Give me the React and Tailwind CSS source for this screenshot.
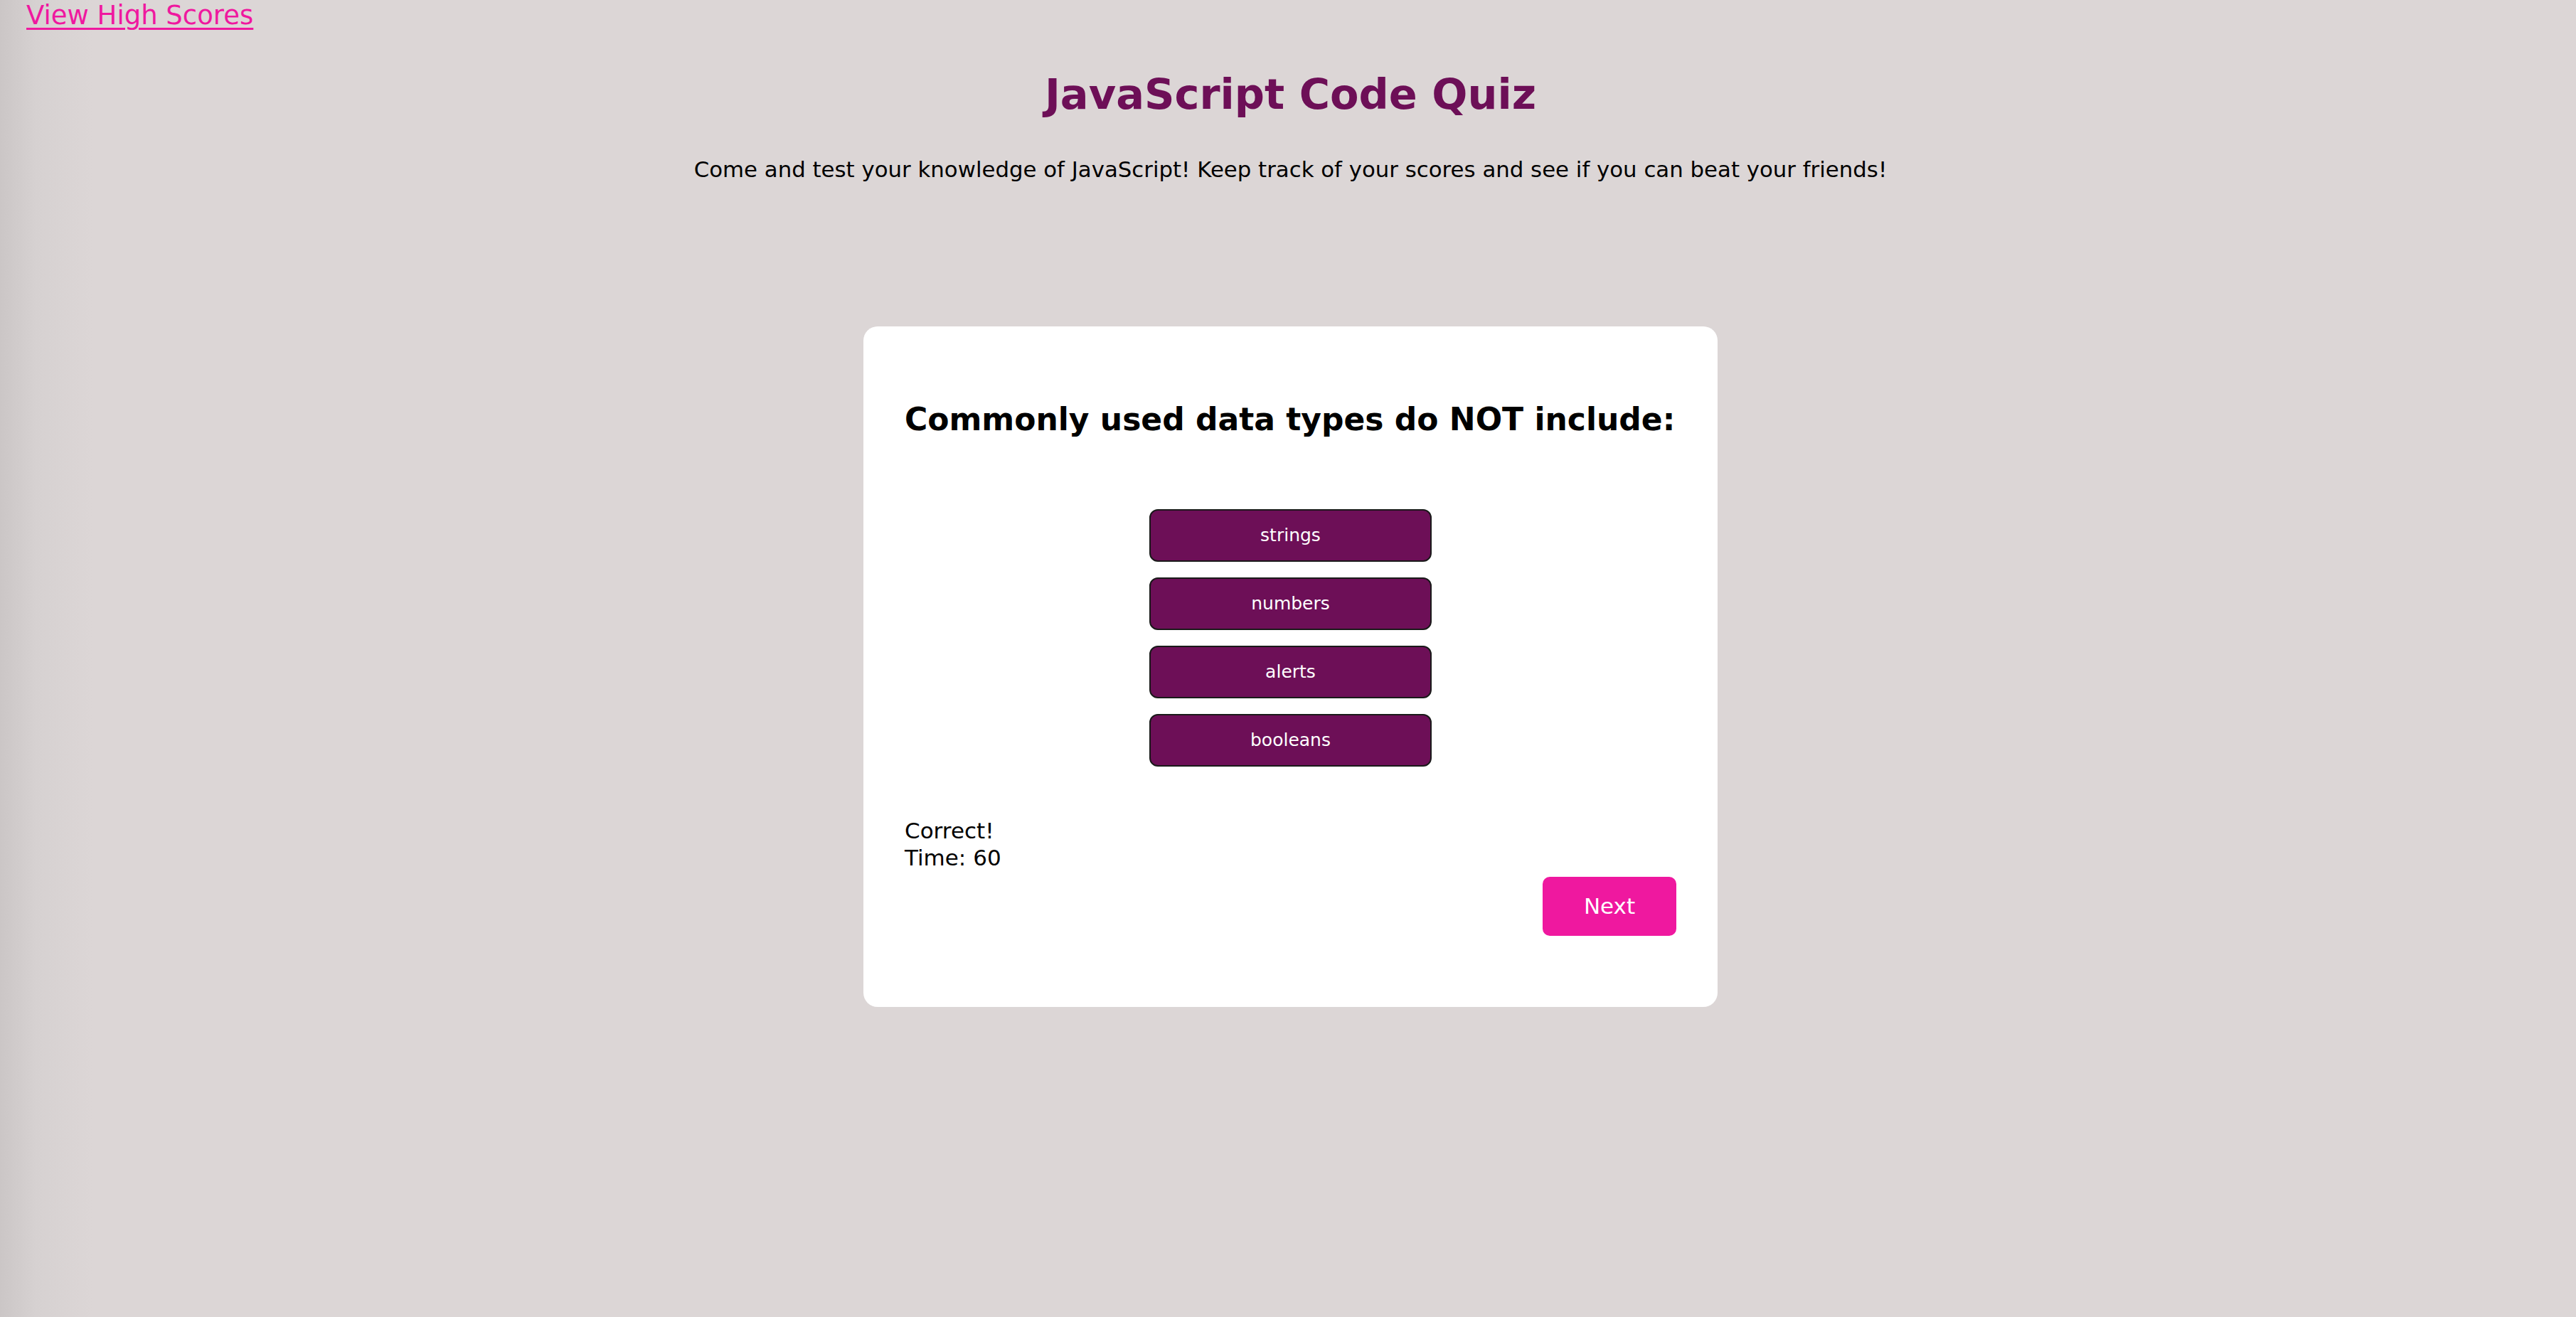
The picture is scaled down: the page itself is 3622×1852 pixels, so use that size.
import React from 'react';

const CHOICES = ['strings', 'numbers', 'alerts', 'booleans'];

const ChoiceButton = ({ label }) => (
  <button className="flex h-[74px] w-[397px] items-center justify-center rounded-[12px] border-2 border-[#1a1a1a] bg-[#6d0f57] text-[25px] text-white">
    {label}
  </button>
);

const App = () => {
  return (
    <div className="min-h-screen bg-[#dcd6d6] bg-[linear-gradient(to_right,#cbc6c6_0px,#d6d1d1_50px,#dcd6d6_130px)] pl-[7px] font-['DejaVu_Sans',sans-serif] text-black">
      <header>
        <a href="#" className="ml-[30px] block w-fit text-[37px] leading-[43px] text-[#ef189f] underline decoration-[3px] underline-offset-[5px]">
          View High Scores
        </a>
        <h1 className="mt-[55px] text-center text-[59px] font-bold leading-[69px] text-[#6d0f57]">
          JavaScript Code Quiz
        </h1>
        <p className="mt-[53px] text-center text-[30.8px] leading-[36px]">
          Come and test your knowledge of JavaScript! Keep track of your scores and see if you can beat your friends!
        </p>
      </header>

      <main className="mx-auto mt-[203px] w-[1201px] rounded-[20px] bg-white px-[58px] pb-[100px] pt-[105px]">
        <h2 className="whitespace-nowrap text-[44px] font-bold leading-[51px]">
          Commonly used data types do NOT include:
        </h2>

        <div className="mt-[101px] flex flex-col items-center gap-[22px]">
          {CHOICES.map((choice) => (
            <ChoiceButton key={choice} label={choice} />
          ))}
        </div>

        <div className="mt-[71px] text-[31px] leading-[38px]">
          <p>Correct!</p>
          <p>Time: 60</p>
        </div>

        <div className="mt-[8px] flex justify-end">
          <button className="h-[83px] w-[188px] rounded-[10px] bg-[#ef189f] text-[31px] text-white">
            Next
          </button>
        </div>
      </main>
    </div>
  );
};

export default App;
